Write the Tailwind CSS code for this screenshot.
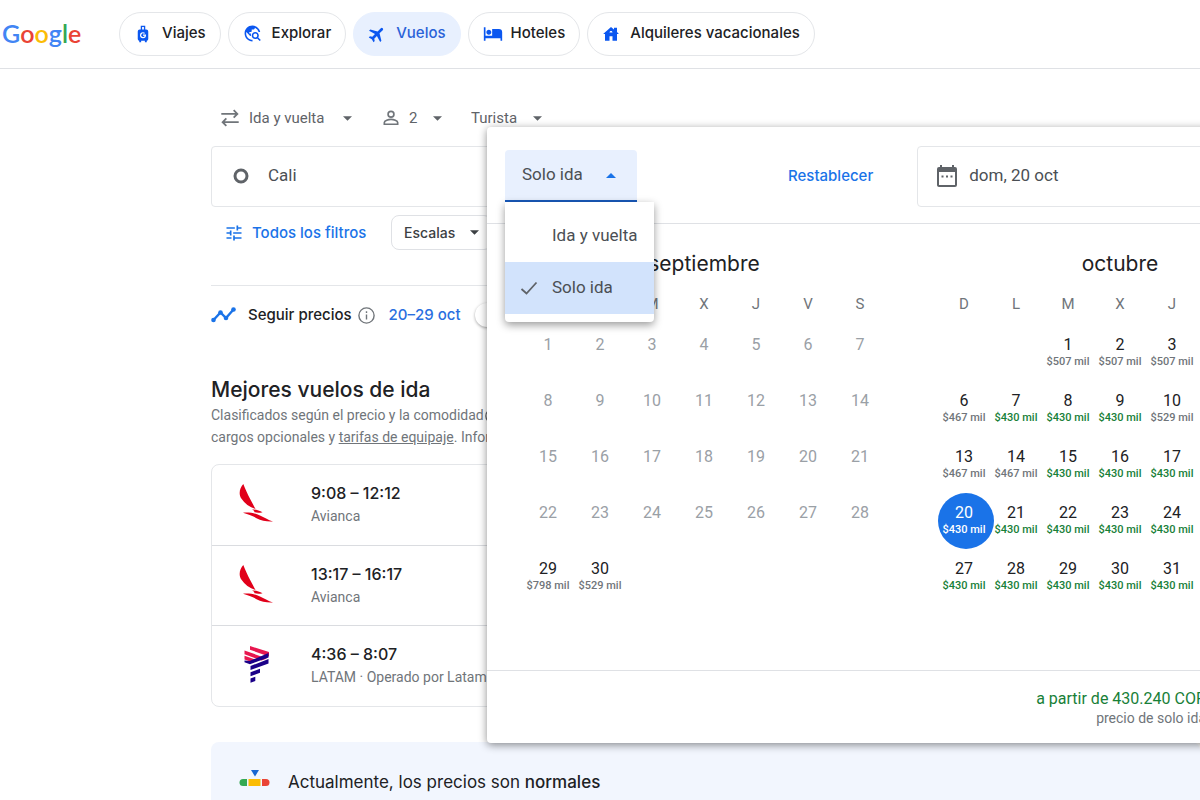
<!DOCTYPE html>
<html lang="es">
<head>
<meta charset="utf-8">
<meta name="viewport" content="width=device-width, initial-scale=1">
<title>Google Vuelos</title>
<script src="https://cdn.jsdelivr.net/npm/@tailwindcss/browser@4"></script>
</head>
<body class="h-screen overflow-hidden bg-white font-[family-name:Roboto,sans-serif] text-[#202124]">

<header class="flex h-[69px] items-center border-b border-[#dfe1e5] pb-px">
  <a href="#" aria-label="Google" class="flex w-[119px] shrink-0 pb-0.5 pl-0.5 font-[family-name:Lato,sans-serif] text-[25px] leading-8 font-semibold"><span class="text-[#4285f4]">G</span><span class="text-[#ea4335]">o</span><span class="text-[#fbbc05]">o</span><span class="text-[#4285f4]">g</span><span class="text-[#34a853]">l</span><span class="text-[#ea4335]">e</span></a>
  <nav class="flex gap-[7px] font-[family-name:Inter,sans-serif] text-[15px] font-medium whitespace-nowrap">
    <a href="#" class="flex h-11 items-center gap-2.5 rounded-full border border-[#e4e6e9] px-3.5">
      <svg class="size-[18px]" viewBox="0 0 24 24" fill="#0b57f0"><path fill-rule="evenodd" d="M9 1h6v5h1.500a2.500 2.500 0 0 1 2.500 2.500v10a2.500 2.500 0 0 1-2 2.450V23h-2.500v-2h-5v2H7v-2.050A2.500 2.500 0 0 1 5 18.500v-10A2.500 2.500 0 0 1 7.500 6H9zM10.800 2.800V6h2.400V2.800zM12 9.500a4 4 0 1 0 4 4v-.7h-4v1.500h2.300A2.400 2.400 0 1 1 13.600 11.700l1.100-1.100A4 4 0 0 0 12 9.500z"/></svg>
      <span>Viajes</span></a>
    <a href="#" class="flex h-11 items-center gap-2.5 rounded-full border border-[#e4e6e9] px-3.5">
      <svg class="size-[19px]" viewBox="0 0 24 24" fill="#0b57f0"><path d="M19.300 16.900c.4-.7.700-1.500.7-2.400 0-2.500-2-4.500-4.500-4.500S11 12 11 14.500s2 4.500 4.500 4.500c.9 0 1.700-.3 2.400-.7l3.200 3.200 1.400-1.400zM15.500 17a2.500 2.500 0 1 1 0-5 2.500 2.500 0 0 1 0 5zM12 20v2C6.480 22 2 17.520 2 12S6.480 2 12 2c4.840 0 8.870 3.440 9.800 8h-2.070A8 8 0 0 0 15 4.590V5c0 1.100-.9 2-2 2h-2v2c0 .55-.45 1-1 1H8v2h2v3H9l-4.790-4.790C4.080 10.790 4 11.380 4 12c0 4.410 3.590 8 8 8z"/></svg>
      <span>Explorar</span></a>
    <a href="#" aria-current="page" class="flex h-11 items-center gap-2.5 rounded-full border border-[#e8f0fe] bg-[#e8f0fe] px-3.5 text-[#2a62d8]">
      <svg class="size-[18px]" viewBox="0 0 24 24" fill="#0b57f0"><path transform="rotate(45 12 12)" d="M22.500 16.500v-2.300L13.800 9V3a1.800 1.800 0 0 0-3.600 0v6l-8.700 5.200v2.300l8.700-2.500v5l-2.700 1.800V23l4.500-1.200 4.500 1.200v-2.200L13.800 19v-5z"/></svg>
      <span>Vuelos</span></a>
    <a href="#" class="flex h-11 items-center gap-2 rounded-full border border-[#e4e6e9] px-3.5">
      <svg class="size-[20px]" viewBox="0 0 24 24" fill="#0b57f0"><path d="M7 13c1.660 0 3-1.340 3-3S8.660 7 7 7s-3 1.340-3 3 1.340 3 3 3zM19 6h-8v8H3V4H1v16h2v-3h18v3h2V10a4 4 0 0 0-4-4z"/></svg>
      <span>Hoteles</span></a>
    <a href="#" class="flex h-11 items-center gap-2.5 rounded-full border border-[#e4e6e9] px-3.5">
      <svg class="size-[18px]" viewBox="0 0 24 24" fill="#0b57f0"><path d="M20 9.300V3.500h-4v2.400L12 2.500 1.500 12H4v9h6v-6h4v6h6v-9h2.500zM10 10c0-1.100.9-2 2-2s2 .9 2 2z"/></svg>
      <span>Alquileres vacacionales</span></a>
  </nav>
</header>

<main class="relative pt-9 pl-[211px]">
  <!-- Trip options -->
  <form class="flex h-[26px] items-center pl-2 text-[15px] leading-[26px] text-[#5f6368]">
    <div class="flex w-[162px] items-center gap-2">
      <svg class="size-[22px] shrink-0" viewBox="0 0 24 24" fill="none" stroke="#70757a" stroke-width="2"><path d="M2.500 7.500h17M16 3.500l4 4-4 4M21.500 16.500h-17M8 12.500l-4 4 4 4"/></svg>
      <select aria-label="Tipo de viaje" class="w-[86px] appearance-none bg-transparent"><option>Ida y vuelta</option></select>
      <svg class="h-[5px] w-[9px] shrink-0" viewBox="0 0 10 5" fill="#5f6368"><path d="M0 0h10L5 5z"/></svg>
    </div>
    <button type="button" aria-label="2 pasajeros" class="flex w-[90px] items-center gap-2">
      <svg class="size-5" viewBox="0 0 24 24" fill="none" stroke="#70757a" stroke-width="2"><circle cx="12" cy="7.500" r="3.500"/><path d="M4 19.500v-2c0-2.500 5-3.800 8-3.800s8 1.300 8 3.800v2z"/></svg>
      <span>2</span>
      <svg class="ml-2 h-[5px] w-[9px]" viewBox="0 0 10 5" fill="#5f6368"><path d="M0 0h10L5 5z"/></svg>
    </button>
    <select aria-label="Clase" class="w-[62px] appearance-none bg-transparent"><option>Turista</option></select>
    <svg class="h-[5px] w-[9px]" viewBox="0 0 10 5" fill="#5f6368"><path d="M0 0h10L5 5z"/></svg>
  </form>

  <div class="mt-[15px] flex h-[61px] items-center gap-[19px] rounded border border-[#e4e6e9] pb-0.5 pl-[21px]">
    <svg class="size-4 shrink-0" viewBox="0 0 16 16" fill="none" stroke="#5f6368" stroke-width="3"><circle cx="8" cy="8" r="6"/></svg>
    <input type="text" aria-label="Origen" value="Cali" class="w-40 text-[17px] text-[#4b4f54] outline-none">
  </div>

  <div class="mt-2 flex h-[35px] items-center font-[family-name:Inter,sans-serif] font-medium">
    <button type="button" class="flex h-[35px] w-[180px] items-center gap-2 pt-px pl-[13px] text-[15px] text-[#1a73e8]">
      <svg class="size-5" viewBox="0 0 24 24" fill="#1a73e8"><path d="M3 17v2h6v-2zM3 5v2h10V5zm10 16v-2h8v-2h-8v-2h-2v6zM7 9v2H3v2h4v2h2V9zm14 4v-2H11v2zm-6-4h2V7h4V5h-4V3h-2z"/></svg>
      Todos los filtros</button>
    <button type="button" class="flex h-[35px] items-center gap-[15px] rounded-lg border border-[#dfe1e5] px-3 text-sm text-[#3c4043]">Escalas
      <svg class="h-[5px] w-[9px]" viewBox="0 0 10 5" fill="#3c4043"><path d="M0 0h10L5 5z"/></svg></button>
  </div>

  <hr class="mt-[35px] border-[#e4e6e9]">

  <div class="mt-[15px] flex h-[28px] items-center font-[family-name:Inter,sans-serif] text-[15px] font-medium">
    <svg class="mr-3 h-4 w-[25px]" viewBox="0 0 25 16" fill="none" stroke="#1a73e8" stroke-width="2.400"><path d="M2.500 13l7-7.500 5.500 5.500 7.500-8.500"/><g fill="#1a73e8" stroke="none"><circle cx="2.500" cy="13" r="2.300"/><circle cx="9.500" cy="5.500" r="2.300"/><circle cx="15" cy="11" r="2.300"/><circle cx="22.500" cy="2.500" r="2.300"/></g></svg>
    <span id="seguir">Seguir precios</span>
    <svg class="mr-3.5 ml-1.5 size-[17px]" viewBox="0 0 17 17" fill="none" stroke="#70757a" stroke-width="1.400"><circle cx="8.500" cy="8.500" r="7.600"/><path d="M8.500 7.500v5M8.500 4.200v1.700"/></svg>
    <span class="mr-3.5 text-[#2a6fe0]">20–29 oct</span>
    <input type="checkbox" aria-labelledby="seguir" class="size-6 appearance-none rounded-full bg-white shadow-[0_1px_3px_rgba(0,0,0,0.35)]">
  </div>

  <h1 class="mt-[47px] font-[family-name:Inter,sans-serif] text-[21px] leading-7 font-medium">Mejores vuelos de ida</h1>
  <p class="h-[44px] overflow-hidden text-sm leading-[22px] whitespace-nowrap text-[#70757a]">Clasificados según el precio y la comodidad<svg class="ml-px inline size-4" viewBox="0 0 17 17" fill="none" stroke="#5f6368" stroke-width="1.400"><circle cx="8.500" cy="8.500" r="7.600"/></svg><br>cargos opcionales y <a href="#" class="underline">tarifas de equipaje</a>. Información sobre</p>

  <ul class="mt-4 divide-y divide-[#dadce0] rounded-lg border border-[#e4e6e9]">
    <li class="flex h-[81px] items-center pb-[3px]">
      <svg class="mr-[37px] ml-[26px] h-10 w-9" viewBox="0 0 36 40" fill="#e1001a"><path d="M5.300 0C1.500 4.500.3 10 3.500 14.800c3 4.800 8 8.200 14 10.200C15 20 9.500 11 5.300 0zM14 25.500c3.500 0 7.500 1 10.500 2.800-3 .8-6 .7-8.500-.3 1-.6 0-1.500-2-2.500zM5 28.700c6-.4 12 .2 17 2.800 4 2 8 4.300 13 6-6 .3-12-.6-16-3-3-2.300-8-4-14-5.800z"/></svg>
      <div><p class="font-[family-name:Inter,sans-serif] text-base leading-6 font-medium">9:08 – 12:12</p><p class="text-sm leading-[22px] text-[#70757a]">Avianca</p></div>
    </li>
    <li class="flex h-[80px] items-center pb-px">
      <svg class="mr-[37px] ml-[26px] h-10 w-9" viewBox="0 0 36 40" fill="#e1001a"><path d="M5.300 0C1.500 4.500.3 10 3.500 14.800c3 4.800 8 8.200 14 10.200C15 20 9.500 11 5.300 0zM14 25.500c3.500 0 7.500 1 10.500 2.800-3 .8-6 .7-8.500-.3 1-.6 0-1.500-2-2.500zM5 28.700c6-.4 12 .2 17 2.800 4 2 8 4.300 13 6-6 .3-12-.6-16-3-3-2.300-8-4-14-5.800z"/></svg>
      <div><p class="font-[family-name:Inter,sans-serif] text-base leading-6 font-medium">13:17 – 16:17</p><p class="text-sm leading-[22px] text-[#70757a]">Avianca</p></div>
    </li>
    <li class="flex h-[80px] items-center pb-[3px]">
      <svg class="mr-[37px] ml-[26px] h-10 w-9" viewBox="0 0 36 40"><g fill="#e8174f"><path d="M12 1l19 6v4.500L12 4.700zM6.500 5.500L29 13.500l-5.500 2L6.500 9.300z"/><path d="M6.500 10.800L20 15.500l-5 2-8.500-3z"/></g><g fill="#1b0088"><path d="M30.500 8v4.500L12 19.200l-5.500-2v-1.700l5 .6zM30.500 14v4.500L12.500 25v-4zM12.500 27.200l9.500-3.500v4l-9.500 3.500zM12.500 33.500l4.800-1.800v4.200l-4.800 1.800z"/></g></svg>
      <div class="whitespace-nowrap"><p class="font-[family-name:Inter,sans-serif] text-base leading-6 font-medium">4:36 – 8:07</p><p class="text-sm leading-[22px] text-[#70757a]">LATAM · Operado por Latam</p></div>
    </li>
  </ul>

  <section class="mt-[35px] flex h-20 items-center rounded-lg bg-[#f2f6fe] pl-7">
    <svg class="mr-[18px] h-6 w-[31px]" viewBox="0 0 31 24"><path fill="#1967d2" d="M12 0h8l-4 6.500z"/><path fill="#34a853" d="M4 9h4v7H4a3.500 3.500 0 0 1 0-7z"/><path fill="#fbbc04" d="M9.500 9h12v7h-12z"/><path fill="#ea4335" d="M23 9h4a3.500 3.500 0 0 1 0 7h-4z"/></svg>
    <p class="pt-px font-[family-name:Inter,sans-serif] text-[17px]">Actualmente, los precios son <b class="font-medium">normales</b></p>
  </section>

  <!-- Date picker -->
  <div role="dialog" aria-label="Fechas" class="absolute top-[58px] left-[487px] w-max rounded bg-white shadow-[0_2px_8px_rgba(0,0,0,0.45)]">
    <div class="flex h-[97px] items-center border-b border-[#dfe1e5] pt-0.5 pl-[18px]">
      <div class="relative">
        <button type="button" aria-haspopup="listbox" aria-expanded="true" class="flex h-[52px] w-[132px] items-center justify-between rounded-t border-b-2 border-[#185abc] bg-[#e8f0fe] pr-[21px] pl-[17px] text-[17px] text-[#4b4f54]">Solo ida
          <svg class="h-[5px] w-2.5" viewBox="0 0 10 5" fill="#1a73e8"><path d="M0 5h10L5 0z"/></svg></button>
        <ul role="listbox" aria-label="Tipo de viaje" class="absolute top-full left-0 z-10 w-[149px] rounded-b bg-white py-2 text-[17px] text-[#4b4f54] shadow-[0_3px_8px_rgba(0,0,0,0.4)]">
          <li role="option" aria-selected="false" class="flex h-[52px] items-center pl-[47px] whitespace-nowrap">Ida y vuelta</li>
          <li role="option" aria-selected="true" class="flex h-[52px] items-center gap-3.5 bg-[#d2e3fc] pl-[15px]">
            <svg class="h-[18px] w-[18px]" viewBox="0 0 18 18" fill="none" stroke="#5f6368" stroke-width="1.800"><path d="M1.500 10l5 4.500L16.500 3.500"/></svg>Solo ida</li>
        </ul>
      </div>
      <button type="button" class="mr-11 ml-[151px] font-[family-name:Inter,sans-serif] text-[15px] font-medium text-[#1a73e8]">Restablecer</button>
      <div class="mr-5 flex h-[61px] flex-1 items-center gap-2.5 rounded border border-[#e4e6e9] pl-[17px]">
        <svg class="size-6 shrink-0" viewBox="0 0 24 24" fill="#5f6368"><path d="M20 3h-1V1h-2v2H7V1H5v2H4a2 2 0 0 0-2 2v16c0 1.100.9 2 2 2h16a2 2 0 0 0 2-2V5a2 2 0 0 0-2-2zm0 18H4V8h16z"/><path d="M6.500 11.500h2v2h-2zm4.500 0h2v2h-2zm4.500 0h2v2h-2z"/></svg>
        <input type="text" aria-label="Salida" value="dom, 20 oct" class="w-full text-[17px] text-[#4b4f54] outline-none">
      </div>
    </div>
    <div id="months" class="flex h-[446px] gap-[52px] px-[35px] pt-[25px]"></div>
    <div class="flex h-[73px] flex-col items-end justify-center border-t border-[#dfe1e5] pt-0.5 pr-[131px]">
      <p class="text-base leading-5 text-[#188038]">a partir de 430.240 COP</p>
      <p class="text-sm leading-[18px] text-[#70757a]">precio de solo ida</p>
    </div>
  </div>
</main>

<script>
const months = [
  { name: 'septiembre', offset: 0, days: 30, enabledFrom: 29, prices: { 29: 798, 30: 529 } },
  { name: 'octubre', offset: 2, days: 31, enabledFrom: 1, selected: 20, prices: {
    1: 507, 2: 507, 3: 507, 6: 467, 7: 430, 8: 430, 9: 430, 10: 529, 13: 467, 14: 467, 15: 430, 16: 430, 17: 430,
    20: 430, 21: 430, 22: 430, 23: 430, 24: 430, 27: 430, 28: 430, 29: 430, 30: 430, 31: 430 } }
];
const cell = (m, d) => {
  if (d < 1 || d > m.days) return '<td></td>';
  const off = d < m.enabledFrom, sel = d === m.selected, p = m.prices[d];
  const tone = sel ? 'text-white bg-[#1a73e8]' : off ? 'text-[#9aa0a6]' : 'text-[#202124]';
  const priceTone = sel ? 'text-white' : p === 430 ? 'text-[#188038]' : 'text-[#70757a]';
  return `<td class="h-14 p-0"><button type="button" ${off ? 'disabled' : ''} class="flex h-14 ${sel ? 'w-14 pr-1' : 'w-full'} flex-col items-center rounded-full pt-[10px] text-base leading-5 ${tone}">${d}${p ? `<span class="text-[11px] leading-[13px] font-medium whitespace-nowrap ${priceTone}">$${p} mil</span>` : ''}</button></td>`;
};
document.getElementById('months').innerHTML = months.map(m => {
  let rows = '';
  for (let r = 0; r < 5; r++) {
    rows += '<tr>';
    for (let c = 0; c < 7; c++) rows += cell(m, r * 7 + c + 1 - m.offset);
    rows += '</tr>';
  }
  return `<table class="h-max w-[364px] table-fixed"><caption class="h-[30px] font-[family-name:Inter,sans-serif] text-[21px] leading-[30px]">${m.name}</caption>
    <thead><tr>${['D','L','M','X','J','V','S'].map(x => `<th scope="col" class="h-[46px] p-0 pt-1 text-[15px] font-normal text-[#70757a]">${x}</th>`).join('')}</tr></thead><tbody>${rows}</tbody></table>`;
}).join('');
</script>
</body>
</html>
